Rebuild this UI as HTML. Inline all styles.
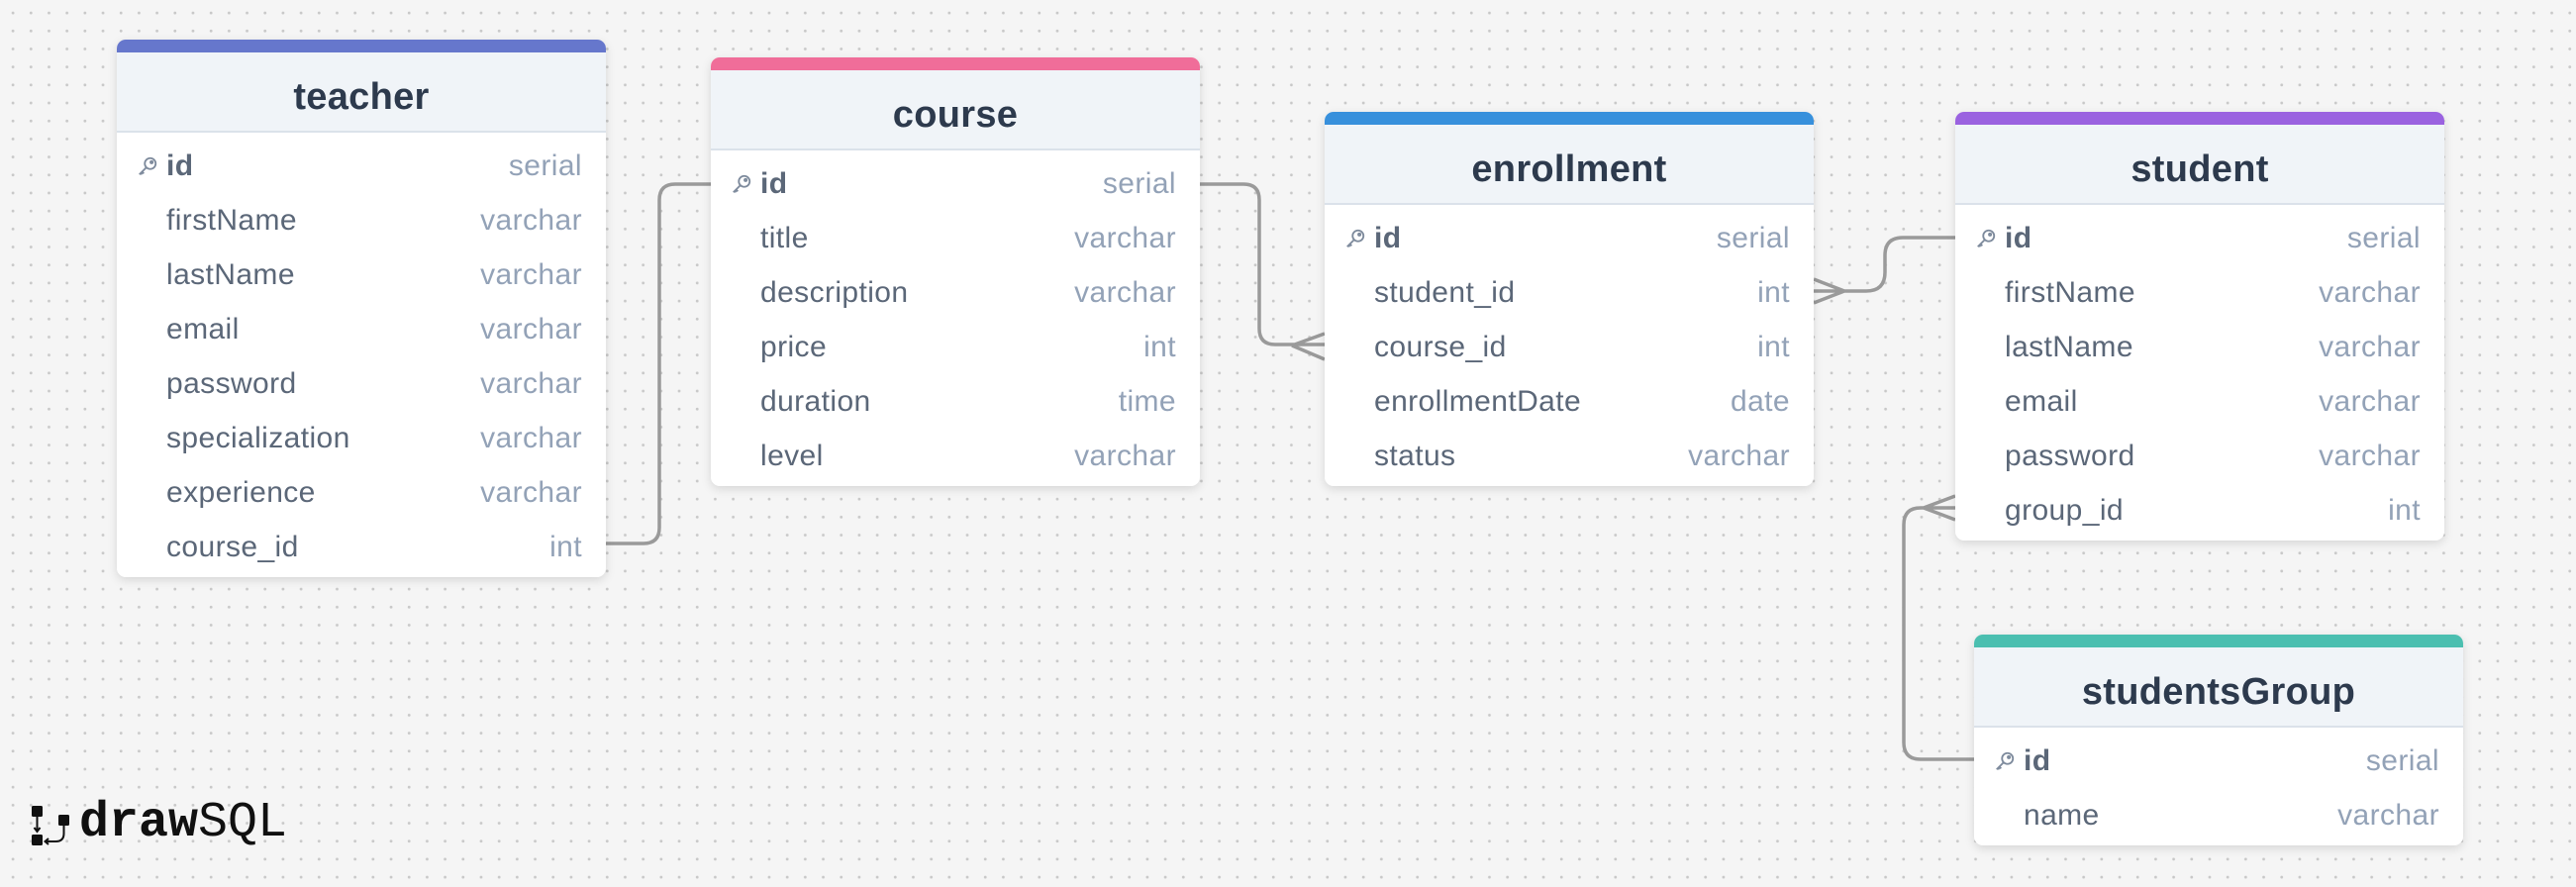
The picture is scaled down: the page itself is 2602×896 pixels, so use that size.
<!DOCTYPE html>
<html><head><meta charset="utf-8"><style>
*{box-sizing:border-box;margin:0;padding:0}
body{width:2602px;height:896px;overflow:hidden;background-color:#f5f5f5;background-image:radial-gradient(circle,#c8c8c8 1.3px,transparent 1.6px);background-size:18.2px 18.2px;background-position:4px 4px;font-family:"Liberation Sans",sans-serif;position:relative}
.t{position:absolute;width:494px;background:#fff;border-radius:9px;box-shadow:0 3px 10px rgba(0,0,0,.13);overflow:hidden}
.bar{height:13px}
.h{height:81px;background:#f0f4f8;border-bottom:2px solid #dbe2ea;text-align:center;font-weight:bold;font-size:38px;color:#2d3a4d;line-height:90px;letter-spacing:0.3px}
.rows{padding:6px 0 3px}
.r{height:55px;position:relative;font-size:30px;line-height:55px;color:#5b6778;letter-spacing:0.4px}
.r .n{position:absolute;left:50px}
.r .ty{position:absolute;right:24px;color:#93a2b7}
.r.pk .n{font-weight:bold}
.key{position:absolute;left:20px;top:17px}
svg.lines{position:absolute;left:0;top:0}
</style></head><body>
<svg class="lines" width="2602" height="896" fill="none" stroke="#9a9a9a" stroke-width="3.5">
<path d="M612 549 H650 Q666 549 666 533 V202 Q666 186 682 186 H718"/>
<path d="M1212 186 H1256 Q1272 186 1272 202 V332 Q1272 348 1288 348 H1338 M1305 349 L1338 337 M1305 349 L1338 363"/>
<path d="M1832 294 H1885 Q1904 294 1904 275 V258 Q1904 240 1922 240 H1975 M1863 294 L1832 282 M1863 294 L1832 306"/>
<path d="M1975 513 H1940 Q1923 513 1923 530 V750 Q1923 767 1940 767 H1994 M1943 513 L1975 501 M1943 513 L1975 525"/>
</svg>

<div class="t" style="left:118px;top:40px">
<div class="bar" style="background:#6677cc"></div><div class="h">teacher</div>
<div class="rows">
<div class="r pk"><svg class="key" width="22" height="22" viewBox="0 0 24 24" fill="none" stroke="#7d8a9c" stroke-width="2"><circle cx="15" cy="9" r="6"/><path d="M10.5 13.5 L3 21 M6 18 l2 2 M4.5 19.5 l1.5 1.5"/><circle cx="16.5" cy="7.5" r="1.2"/></svg><span class="n">id</span><span class="ty">serial</span></div>
<div class="r"><span class="n">firstName</span><span class="ty">varchar</span></div>
<div class="r"><span class="n">lastName</span><span class="ty">varchar</span></div>
<div class="r"><span class="n">email</span><span class="ty">varchar</span></div>
<div class="r"><span class="n">password</span><span class="ty">varchar</span></div>
<div class="r"><span class="n">specialization</span><span class="ty">varchar</span></div>
<div class="r"><span class="n">experience</span><span class="ty">varchar</span></div>
<div class="r"><span class="n">course_id</span><span class="ty">int</span></div>
</div></div>

<div class="t" style="left:718px;top:58px">
<div class="bar" style="background:#f06d99"></div><div class="h">course</div>
<div class="rows">
<div class="r pk"><svg class="key" width="22" height="22" viewBox="0 0 24 24" fill="none" stroke="#7d8a9c" stroke-width="2"><circle cx="15" cy="9" r="6"/><path d="M10.5 13.5 L3 21 M6 18 l2 2 M4.5 19.5 l1.5 1.5"/><circle cx="16.5" cy="7.5" r="1.2"/></svg><span class="n">id</span><span class="ty">serial</span></div>
<div class="r"><span class="n">title</span><span class="ty">varchar</span></div>
<div class="r"><span class="n">description</span><span class="ty">varchar</span></div>
<div class="r"><span class="n">price</span><span class="ty">int</span></div>
<div class="r"><span class="n">duration</span><span class="ty">time</span></div>
<div class="r"><span class="n">level</span><span class="ty">varchar</span></div>
</div></div>

<div class="t" style="left:1338px;top:113px">
<div class="bar" style="background:#3790dc"></div><div class="h">enrollment</div>
<div class="rows">
<div class="r pk"><svg class="key" width="22" height="22" viewBox="0 0 24 24" fill="none" stroke="#7d8a9c" stroke-width="2"><circle cx="15" cy="9" r="6"/><path d="M10.5 13.5 L3 21 M6 18 l2 2 M4.5 19.5 l1.5 1.5"/><circle cx="16.5" cy="7.5" r="1.2"/></svg><span class="n">id</span><span class="ty">serial</span></div>
<div class="r"><span class="n">student_id</span><span class="ty">int</span></div>
<div class="r"><span class="n">course_id</span><span class="ty">int</span></div>
<div class="r"><span class="n">enrollmentDate</span><span class="ty">date</span></div>
<div class="r"><span class="n">status</span><span class="ty">varchar</span></div>
</div></div>

<div class="t" style="left:1975px;top:113px">
<div class="bar" style="background:#9a62e0"></div><div class="h">student</div>
<div class="rows">
<div class="r pk"><svg class="key" width="22" height="22" viewBox="0 0 24 24" fill="none" stroke="#7d8a9c" stroke-width="2"><circle cx="15" cy="9" r="6"/><path d="M10.5 13.5 L3 21 M6 18 l2 2 M4.5 19.5 l1.5 1.5"/><circle cx="16.5" cy="7.5" r="1.2"/></svg><span class="n">id</span><span class="ty">serial</span></div>
<div class="r"><span class="n">firstName</span><span class="ty">varchar</span></div>
<div class="r"><span class="n">lastName</span><span class="ty">varchar</span></div>
<div class="r"><span class="n">email</span><span class="ty">varchar</span></div>
<div class="r"><span class="n">password</span><span class="ty">varchar</span></div>
<div class="r"><span class="n">group_id</span><span class="ty">int</span></div>
</div></div>

<div class="t" style="left:1994px;top:641px">
<div class="bar" style="background:#4bbfb0"></div><div class="h">studentsGroup</div>
<div class="rows">
<div class="r pk"><svg class="key" width="22" height="22" viewBox="0 0 24 24" fill="none" stroke="#7d8a9c" stroke-width="2"><circle cx="15" cy="9" r="6"/><path d="M10.5 13.5 L3 21 M6 18 l2 2 M4.5 19.5 l1.5 1.5"/><circle cx="16.5" cy="7.5" r="1.2"/></svg><span class="n">id</span><span class="ty">serial</span></div>
<div class="r"><span class="n">name</span><span class="ty">varchar</span></div>
</div></div>

<svg style="position:absolute;left:30px;top:812px" width="42" height="44" viewBox="0 0 42 44">
<rect x="2" y="2" width="11" height="11" rx="1.5" fill="#111"/>
<rect x="2" y="31" width="11" height="11" rx="1.5" fill="#111"/>
<rect x="29" y="11" width="11" height="11" rx="1.5" fill="#111"/>
<path d="M7.5 13 V27 M4.5 24 L7.5 28 L10.5 24" stroke="#111" stroke-width="2" fill="none"/>
<path d="M34.5 22 V30 Q34.5 38 26 38 H16 M19 35 L15.5 38 L19 41" stroke="#111" stroke-width="2" fill="none"/>
</svg>
<div style="position:absolute;left:80px;top:804px;font-family:'Liberation Mono',monospace;font-size:50px;line-height:56px;color:#111;white-space:nowrap"><b>draw</b><span style="font-weight:normal">SQL</span></div>
</body></html>
